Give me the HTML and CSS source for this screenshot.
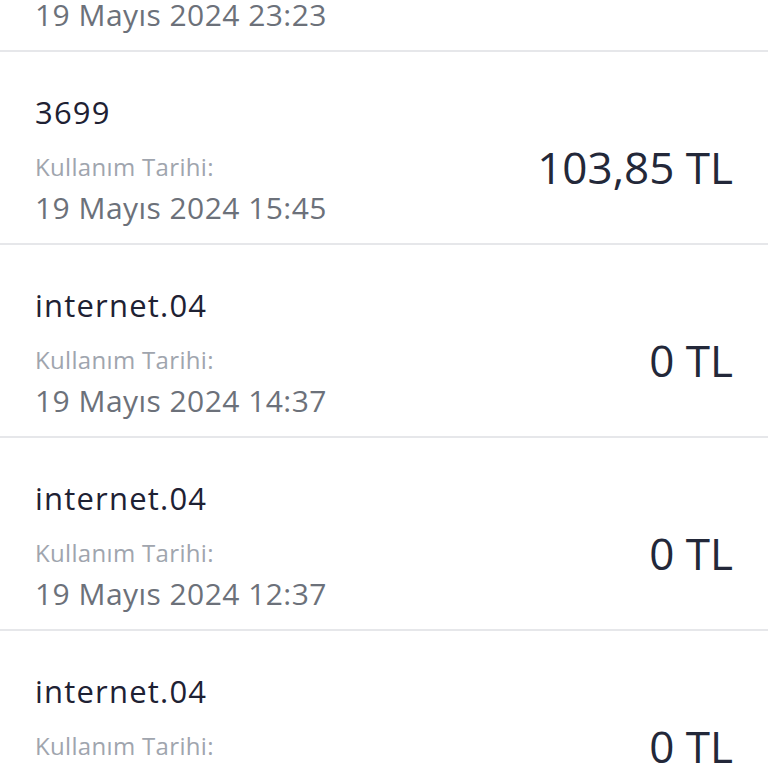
FILE: index.html
```html
<!DOCTYPE html>
<html lang="tr">
<head>
<meta charset="utf-8">
<link rel="stylesheet" href="styles.css">
</head>
<body>
<div class="list">
  <div class="row">
    <div class="info">
      <div class="title">internet.04</div>
      <div class="label">Kullanım Tarihi:</div>
      <div class="date">19 Mayıs 2024 23:23</div>
    </div>
    <div class="amount">0 TL</div>
  </div>
  <div class="row">
    <div class="info">
      <div class="title">3699</div>
      <div class="label">Kullanım Tarihi:</div>
      <div class="date">19 Mayıs 2024 15:45</div>
    </div>
    <div class="amount">103,85 TL</div>
  </div>
  <div class="row">
    <div class="info">
      <div class="title">internet.04</div>
      <div class="label">Kullanım Tarihi:</div>
      <div class="date">19 Mayıs 2024 14:37</div>
    </div>
    <div class="amount">0 TL</div>
  </div>
  <div class="row">
    <div class="info">
      <div class="title">internet.04</div>
      <div class="label">Kullanım Tarihi:</div>
      <div class="date">19 Mayıs 2024 12:37</div>
    </div>
    <div class="amount">0 TL</div>
  </div>
  <div class="row">
    <div class="info">
      <div class="title">internet.04</div>
      <div class="label">Kullanım Tarihi:</div>
      <div class="date">19 Mayıs 2024 11:37</div>
    </div>
    <div class="amount">0 TL</div>
  </div>
</div>
</body>
</html>
```
FILE: styles.css
```css
html, body {
  margin: 0;
  padding: 0;
  background: #ffffff;
  overflow: hidden;
}
body {
  font-family: "Open Sans", "Noto Sans", sans-serif;
  width: 768px;
  height: 768px;
}
.list {
  margin-top: -141px;
}
.row {
  height: 191px;
  border-bottom: 2px solid #e6e7ea;
  display: flex;
  align-items: flex-start;
  justify-content: space-between;
  padding: 0 35px;
  box-sizing: content-box;
}
.info {
  display: flex;
  flex-direction: column;
  padding-top: 42px;
}
.title {
  font-size: 31px;
  line-height: 36px;
  letter-spacing: 1.2px;
  color: #1e2133;
}
.label {
  font-size: 24px;
  line-height: 30px;
  letter-spacing: 0.33px;
  margin-top: 22px;
  color: #a0a5ae;
}
.date {
  font-size: 30px;
  line-height: 36px;
  letter-spacing: 0.45px;
  margin-top: 8px;
  color: #6c717a;
}
.amount {
  font-size: 44px;
  line-height: 50px;
  color: #232839;
  margin-top: 90px;
}
```
